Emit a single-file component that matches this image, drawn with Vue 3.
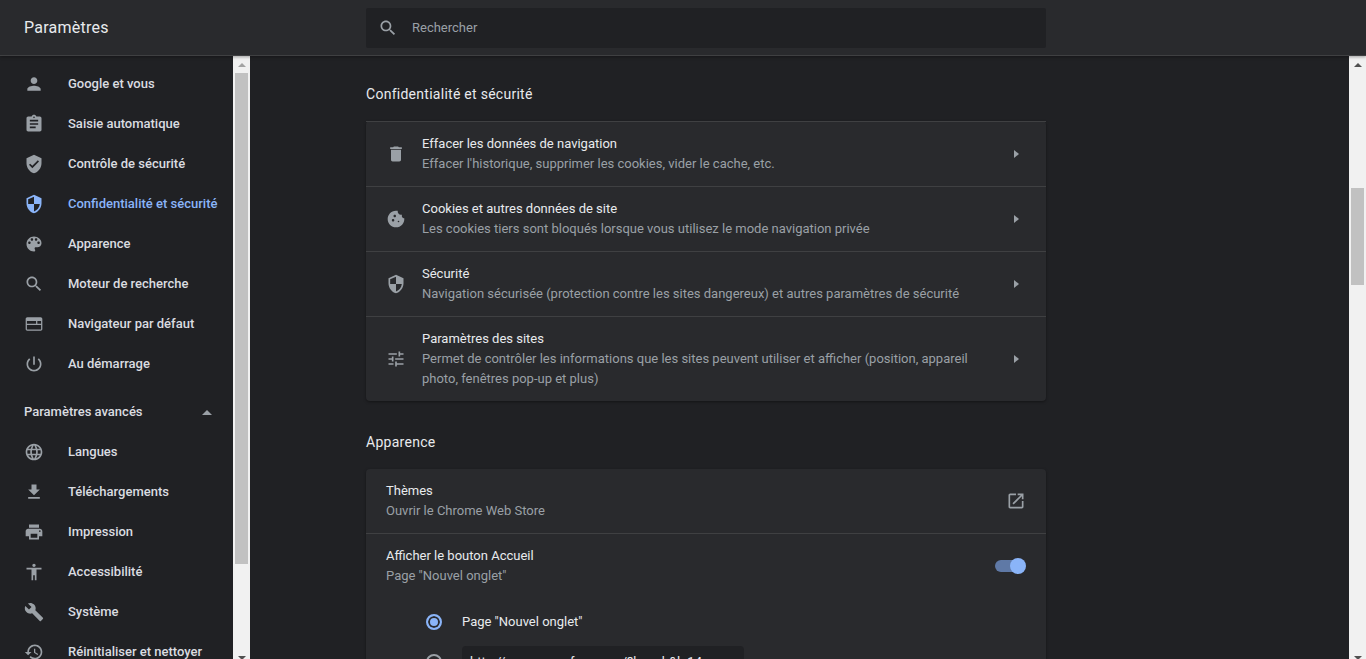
<script setup>
const icons = {
  person: 'M12 12c2.21 0 4-1.79 4-4s-1.79-4-4-4-4 1.79-4 4 1.79 4 4 4zm0 2c-2.67 0-8 1.34-8 4v2h16v-2c0-2.66-5.33-4-8-4z',
  assignment: 'M19 3h-4.18C14.4 1.84 13.3 1 12 1c-1.3 0-2.4.84-2.82 2H5c-1.1 0-2 .9-2 2v14c0 1.1.9 2 2 2h14c1.1 0 2-.9 2-2V5c0-1.1-.9-2-2-2zm-7 0c.55 0 1 .45 1 1s-.45 1-1 1-1-.45-1-1 .45-1 1-1zm2 14H7v-2h7v2zm3-4H7v-2h10v2zm0-4H7V7h10v2z',
  verified: 'M12 1L3 5v6c0 5.55 3.84 10.74 9 12 5.16-1.26 9-6.45 9-12V5l-9-4zm-2 16l-4-4 1.41-1.41L10 14.17l6.59-6.59L18 9l-8 8z',
  security: 'M12 1L3 5v6c0 5.55 3.84 10.74 9 12 5.16-1.26 9-6.45 9-12V5l-9-4zm0 10.99h7c-.53 4.12-3.28 7.79-7 8.94V12H5V6.3l7-3.11v8.8z',
  palette: 'M12 3c-4.97 0-9 4.03-9 9s4.03 9 9 9c.83 0 1.5-.67 1.5-1.5 0-.39-.15-.74-.39-1.01-.23-.26-.38-.61-.38-.99 0-.83.67-1.5 1.5-1.5H16c2.76 0 5-2.24 5-5 0-4.42-4.03-8-9-8zm-5.5 9c-.83 0-1.5-.67-1.5-1.5S5.67 9 6.5 9 8 9.67 8 10.5 7.33 12 6.5 12zm3-4C8.67 8 8 7.33 8 6.5S8.67 5 9.5 5s1.5.67 1.5 1.5S10.33 8 9.5 8zm5 0c-.83 0-1.5-.67-1.5-1.5S13.67 5 14.5 5s1.5.67 1.5 1.5S15.33 8 14.5 8zm3 4c-.83 0-1.5-.67-1.5-1.5S16.67 9 17.5 9s1.5.67 1.5 1.5-.67 1.5-1.5 1.5z',
  search: 'M15.5 14h-.79l-.28-.27C15.41 12.59 16 11.11 16 9.5 16 5.91 13.09 3 9.5 3S3 5.91 3 9.5 5.91 16 9.5 16c1.61 0 3.09-.59 4.23-1.57l.27.28v.79l5 4.99L20.49 19l-4.99-5zm-6 0C7.01 14 5 11.99 5 9.5S7.01 5 9.5 5 14 7.01 14 9.5 11.99 14 9.5 14z',
  web: 'M20 4H4c-1.1 0-2 .9-2 2v12c0 1.1.9 2 2 2h16c1.1 0 2-.9 2-2V6c0-1.1-.9-2-2-2zM3.5 13.2h17v5.3h-17zM3.5 8.5h11v3.2h-11zM16 8.5h4.5v3.2H16z',
  power: 'M13 3h-2v10h2V3zm4.83 2.17l-1.42 1.42C17.99 7.86 19 9.81 19 12c0 3.87-3.13 7-7 7s-7-3.13-7-7c0-2.19 1.01-4.14 2.58-5.42L6.17 5.17C4.23 6.82 3 9.26 3 12c0 4.97 4.03 9 9 9s9-4.03 9-9c0-2.74-1.23-5.18-3.17-6.83z',
  language: 'M11.99 2C6.47 2 2 6.48 2 12s4.47 10 9.99 10C17.52 22 22 17.52 22 12S17.52 2 11.99 2zm6.93 6h-2.95c-.32-1.25-.78-2.45-1.38-3.56 1.84.63 3.37 1.91 4.33 3.56zM12 4.04c.83 1.2 1.48 2.53 1.91 3.96h-3.82c.43-1.43 1.08-2.76 1.91-3.96zM4.26 14C4.1 13.36 4 12.69 4 12s.1-1.36.26-2h3.38c-.08.66-.14 1.32-.14 2 0 .68.06 1.34.14 2H4.26zm.82 2h2.95c.32 1.25.78 2.45 1.38 3.56-1.84-.63-3.37-1.9-4.33-3.56zm2.95-8H5.08c.96-1.66 2.49-2.93 4.33-3.56C8.81 5.55 8.35 6.75 8.03 8zM12 19.96c-.83-1.2-1.48-2.53-1.91-3.96h3.82c-.43 1.43-1.08 2.76-1.91 3.96zM14.34 14H9.66c-.09-.66-.16-1.32-.16-2 0-.68.07-1.35.16-2h4.68c.09.65.16 1.32.16 2 0 .68-.07 1.34-.16 2zm.25 5.56c.6-1.11 1.06-2.31 1.38-3.56h2.95c-.96 1.65-2.49 2.93-4.33 3.56zM16.36 14c.08-.66.14-1.32.14-2 0-.68-.06-1.34-.14-2h3.38c.16.64.26 1.31.26 2s-.1 1.36-.26 2h-3.38z',
  download: 'M19 9h-4V3H9v6H5l7 7 7-7zM5 18v2h14v-2H5z',
  print: 'M19 8H5c-1.66 0-3 1.34-3 3v6h4v4h12v-4h4v-6c0-1.66-1.34-3-3-3zm-3 11H8v-5h8v5zm3-7c-.55 0-1-.45-1-1s.45-1 1-1 1 .45 1 1-.45 1-1 1zm-1-9H6v4h12V3z',
  accessibility: 'M12 2c1.1 0 2 .9 2 2s-.9 2-2 2-2-.9-2-2 .9-2 2-2zm9 7h-6v13h-2v-6h-2v6H9V9H3V7h18v2z',
  build: 'M22.7 19l-9.1-9.1c.9-2.3.4-5-1.5-6.9-2-2-5-2.4-7.4-1.3L9 6 6 9 1.6 4.7C.4 7.1.9 10.1 2.9 12.1c1.9 1.9 4.6 2.4 6.9 1.5l9.1 9.1c.4.4 1 .4 1.4 0l2.3-2.3c.5-.4.5-1.1.1-1.4z',
  restore: 'M13 3c-4.97 0-9 4.03-9 9H1l3.89 3.89.07.14L9 12H6c0-3.87 3.13-7 7-7s7 3.13 7 7-3.13 7-7 7c-1.93 0-3.68-.79-4.94-2.06l-1.42 1.42C8.27 19.99 10.51 21 13 21c4.97 0 9-4.03 9-9s-4.03-9-9-9zm-1 5v5l4.28 2.54.72-1.21-3.5-2.08V8H12z',
  trash: 'M6 19c0 1.1.9 2 2 2h8c1.1 0 2-.9 2-2V7H6v12zM19 4h-3.5l-1-1h-5l-1 1H5v2h14V4z',
  cookie: 'M21.95 10.99c-1.79-.03-3.7-1.95-2.68-4.22-2.97 1-5.78-1.59-5.19-4.56C7.11.74 2 6.41 2 12c0 5.52 4.48 10 10 10 5.89 0 10.54-5.08 9.95-11.01zM8.5 15c-.83 0-1.5-.67-1.5-1.5S7.67 12 8.5 12s1.5.67 1.5 1.5S9.33 15 8.5 15zm2-5C9.67 10 9 9.33 9 8.5S9.67 7 10.5 7s1.5.67 1.5 1.5-.67 1.5-1.5 1.5zm4.5 6c-.55 0-1-.45-1-1s.45-1 1-1 1 .45 1 1-.45 1-1 1z',
  tune: 'M3 17v2h6v-2H3zM3 5v2h10V5H3zm10 16v-2h8v-2h-8v-2h-2v6h2zM7 9v2H3v2h4v2h2V9H7zm14 4v-2H11v2h10zm-6-4h2V7h4V5h-4V3h-2v6z',
  open: 'M19 19H5V5h7V3H5c-1.11 0-2 .9-2 2v14c0 1.1.89 2 2 2h14c1.1 0 2-.9 2-2v-7h-2v7zM14 3v2h3.59l-9.83 9.83 1.41 1.41L19 6.41V10h2V3h-7z',
}

const menuTop = [
  { icon: 'person', label: 'Google et vous' },
  { icon: 'assignment', label: 'Saisie automatique' },
  { icon: 'verified', label: 'Contrôle de sécurité' },
  { icon: 'security', label: 'Confidentialité et sécurité', active: true },
  { icon: 'palette', label: 'Apparence' },
  { icon: 'search', label: 'Moteur de recherche' },
  { icon: 'web', label: 'Navigateur par défaut' },
  { icon: 'power', label: 'Au démarrage' },
]

const menuAdvanced = [
  { icon: 'language', label: 'Langues' },
  { icon: 'download', label: 'Téléchargements' },
  { icon: 'print', label: 'Impression' },
  { icon: 'accessibility', label: 'Accessibilité' },
  { icon: 'build', label: 'Système' },
  { icon: 'restore', label: 'Réinitialiser et nettoyer' },
]

const privacyRows = [
  { icon: 'trash', title: 'Effacer les données de navigation', text: "Effacer l'historique, supprimer les cookies, vider le cache, etc." },
  { icon: 'cookie', title: 'Cookies et autres données de site', text: 'Les cookies tiers sont bloqués lorsque vous utilisez le mode navigation privée' },
  { icon: 'security', title: 'Sécurité', text: 'Navigation sécurisée (protection contre les sites dangereux) et autres paramètres de sécurité' },
  { icon: 'tune', title: 'Paramètres des sites', text: 'Permet de contrôler les informations que les sites peuvent utiliser et afficher (position, appareil photo, fenêtres pop-up et plus)' },
]
</script>

<template>
  <div class="page">
    <header class="topbar">
      <div class="topbar__title">Paramètres</div>
      <div class="search">
        <svg class="search__icon" viewBox="0 0 24 24"><path :d="icons.search" /></svg>
        <span>Rechercher</span>
      </div>
    </header>

    <div class="body">
      <nav class="sidebar">
        <div class="sidebar__list">
          <div
            v-for="item in menuTop"
            :key="item.label"
            :class="['menu-item', { 'menu-item--active': item.active }]"
          >
            <svg class="menu-item__icon" viewBox="0 0 24 24"><path :d="icons[item.icon]" /></svg>
            <span>{{ item.label }}</span>
          </div>
          <div class="advanced">
            <span>Paramètres avancés</span>
            <span class="advanced__arrow"></span>
          </div>
          <div v-for="item in menuAdvanced" :key="item.label" class="menu-item">
            <svg class="menu-item__icon" viewBox="0 0 24 24"><path :d="icons[item.icon]" /></svg>
            <span>{{ item.label }}</span>
          </div>
        </div>
      </nav>

      <div class="scrollbar scrollbar--side">
        <span class="scrollbar__up scrollbar__up--dim"></span>
        <span class="scrollbar__thumb scrollbar__thumb--side"></span>
        <span class="scrollbar__down"></span>
      </div>

      <main class="main">
        <div class="column">
          <h2 class="section-title">Confidentialité et sécurité</h2>
          <section class="card">
            <div v-for="row in privacyRows" :key="row.title" class="row row--border">
              <svg class="row__icon" viewBox="0 0 24 24"><path :d="icons[row.icon]" /></svg>
              <div class="row__body">
                <div class="row__title">{{ row.title }}</div>
                <div class="row__text">{{ row.text }}</div>
              </div>
              <span class="row__end"><span class="chevron"></span></span>
            </div>
          </section>

          <h2 class="section-title section-title--second">Apparence</h2>
          <section class="card">
            <div class="row">
              <div class="row__body">
                <div class="row__title">Thèmes</div>
                <div class="row__text">Ouvrir le Chrome Web Store</div>
              </div>
              <svg class="row__open" viewBox="0 0 24 24"><path :d="icons.open" /></svg>
            </div>
            <div class="row row--border">
              <div class="row__body">
                <div class="row__title">Afficher le bouton Accueil</div>
                <div class="row__text">Page "Nouvel onglet"</div>
              </div>
              <span class="toggle"><span class="toggle__knob"></span></span>
            </div>
            <div class="radios">
              <div class="radio-row">
                <span class="radio radio--on"></span>
                <span class="radio-row__label">Page "Nouvel onglet"</span>
              </div>
              <div class="radio-row radio-row--input">
                <span class="radio"></span>
                <div class="url-input">http://www.gamefree.com/?b=ueb&amp;l=14</div>
              </div>
            </div>
          </section>
        </div>
      </main>

      <div class="scrollbar">
        <span class="scrollbar__up"></span>
        <span class="scrollbar__thumb scrollbar__thumb--main"></span>
        <span class="scrollbar__down"></span>
      </div>
    </div>
  </div>
</template>

<style>
html,
body {
  margin: 0;
  overflow: hidden;
  background: #202124;
}
</style>

<style scoped>
.page {
  display: flex;
  flex-direction: column;
  height: 659px;
  overflow: hidden;
  background: #202124;
  font-family: Roboto, 'Liberation Sans', sans-serif;
  font-size: 13px;
  line-height: 20px;
  color: #e8eaed;
}

.topbar {
  position: relative;
  z-index: 2;
  display: flex;
  align-items: center;
  flex: none;
  height: 55px;
  background: #292a2d;
  border-bottom: 1px solid #3f4042;
  box-shadow: 0 1px 3px rgba(0, 0, 0, 0.35);
}

.topbar__title {
  width: 342px;
  padding-left: 24px;
  font-size: 16px;
  letter-spacing: 0.25px;
  color: #e8eaed;
}

.search {
  display: flex;
  align-items: center;
  width: 680px;
  height: 40px;
  margin-top: 1px;
  background: #202124;
  border-radius: 2px;
  color: #9aa0a6;
}

.search__icon {
  width: 20px;
  height: 20px;
  margin: 0 14px 0 12px;
  fill: #9aa0a6;
  flex: none;
}

.body {
  display: flex;
  flex: 1;
  min-height: 0;
}

.sidebar {
  width: 233px;
  flex: none;
  overflow: hidden;
}

.sidebar__list {
  padding-top: 8px;
}

.menu-item {
  display: flex;
  align-items: center;
  height: 40px;
  padding-left: 24px;
  font-weight: 500;
  color: #dadce0;
  white-space: nowrap;
}

.menu-item__icon {
  width: 20px;
  height: 20px;
  margin-right: 24px;
  flex: none;
  fill: #9aa0a6;
}

.menu-item--active {
  color: #8ab4f8;
}

.menu-item--active .menu-item__icon {
  fill: #8ab4f8;
}

.advanced {
  box-sizing: border-box;
  display: flex;
  align-items: center;
  justify-content: space-between;
  height: 48px;
  padding: 8px 21px 0 24px;
  font-weight: 500;
  color: #dadce0;
}

.advanced__arrow {
  width: 0;
  height: 0;
  border-left: 5px solid transparent;
  border-right: 5px solid transparent;
  border-bottom: 5px solid #9aa0a6;
}

.scrollbar {
  display: flex;
  flex-direction: column;
  align-items: center;
  width: 17px;
  flex: none;
  background: #f1f1f1;
}

.scrollbar__up,
.scrollbar__down {
  flex: none;
  width: 0;
  height: 0;
  border-left: 4px solid transparent;
  border-right: 4px solid transparent;
}

.scrollbar__up {
  margin-top: 7px;
  border-bottom: 4px solid #505050;
}

.scrollbar__up--dim {
  border-bottom-color: #a3a3a3;
}

.scrollbar__down {
  margin-top: auto;
  margin-bottom: -1px;
  border-top: 4px solid #505050;
}

.scrollbar__thumb {
  flex: none;
  width: 13px;
  background: #c1c1c1;
}

.scrollbar__thumb--side {
  height: 491px;
  margin-top: 6px;
}

.scrollbar__thumb--main {
  height: 97px;
  margin-top: 121px;
}

.main {
  flex: 1;
  min-width: 0;
  overflow: hidden;
}

.column {
  width: 680px;
  margin-left: 116px;
}

.section-title {
  margin: 28px 0 17px;
  font-size: 14px;
  font-weight: 400;
  line-height: 20px;
  letter-spacing: 0.27px;
  color: #e8eaed;
}

.section-title--second {
  margin: 31px 0 17px;
}

.card {
  background: #292a2d;
  border-radius: 4px;
  box-shadow: 0 1px 3px rgba(0, 0, 0, 0.4);
}

.row {
  display: flex;
  align-items: center;
  padding: 12px 20px;
}

.row--border {
  border-top: 1px solid #3f4042;
}

.row__icon {
  width: 20px;
  height: 20px;
  margin-right: 16px;
  flex: none;
  fill: #9aa0a6;
}

.row__body {
  flex: 1;
  min-width: 0;
}

.row__title {
  color: #e8eaed;
}

.row__text {
  color: #9aa0a6;
}

.row__end {
  display: flex;
  align-items: center;
  justify-content: center;
  width: 20px;
  height: 20px;
  margin-left: 28px;
  flex: none;
}

.chevron {
  width: 0;
  height: 0;
  border-top: 4.5px solid transparent;
  border-bottom: 4.5px solid transparent;
  border-left: 5px solid #9aa0a6;
}

.row__open {
  width: 20px;
  height: 20px;
  flex: none;
  fill: #9aa0a6;
}

.toggle {
  position: relative;
  width: 26px;
  height: 12px;
  margin-right: 5px;
  flex: none;
  border-radius: 6px;
  background: #5f79a6;
}

.toggle__knob {
  position: absolute;
  top: -2px;
  right: -5px;
  width: 16px;
  height: 16px;
  border-radius: 50%;
  background: #8ab4f8;
}

.radios {
  padding: 4px 0 12px 60px;
}

.radio-row {
  display: flex;
  align-items: center;
  height: 40px;
}

.radio-row--input {
  height: 32px;
  margin-top: 4px;
}

.radio {
  box-sizing: border-box;
  width: 16px;
  height: 16px;
  margin-right: 20px;
  flex: none;
  border: 2px solid #9aa0a6;
  border-radius: 50%;
}

.radio--on {
  border-color: #8ab4f8;
  background: #8ab4f8;
  box-shadow: inset 0 0 0 2px #292a2d;
}

.radio-row__label {
  color: #e8eaed;
}

.url-input {
  width: 266px;
  height: 32px;
  padding: 0 8px;
  line-height: 32px;
  background: #202124;
  border-radius: 4px;
  color: #e8eaed;
  white-space: nowrap;
  overflow: hidden;
}
</style>
